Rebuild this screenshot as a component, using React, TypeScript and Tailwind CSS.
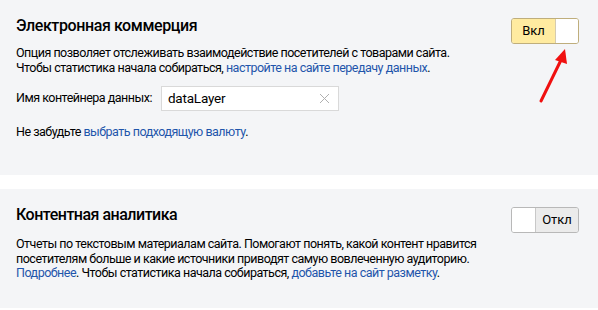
export default function App() {
  const font = { fontFamily: 'Roboto, "Liberation Sans", Arial, sans-serif' };
  return (
    <div className="w-[598px] h-[310px] bg-white relative text-[#000]" style={font}>
      <div className="h-[175px] bg-[#f4f5f7] px-4 pt-[15px] flex justify-between">
        <div>
          <div className="text-[16px] font-medium leading-[22px] tracking-[-0.4px]">Электронная коммерция</div>
          <div className="text-[12.5px] leading-[15px] mt-[8px] tracking-[-0.5px]">
            Опция позволяет отслеживать взаимодействие посетителей с товарами сайта.
            <br />
            Чтобы статистика начала собираться, <a className="text-[#1f55ab]">настройте на сайте передачу данных</a>.
          </div>
          <div className="flex items-center mt-[11px] text-[12.5px] tracking-[-0.5px]">
            <span>Имя контейнера данных:</span>
            <div className="ml-[9px] w-[178px] h-[25px] bg-white border border-[#d9d9d9] flex items-center pl-[6px] pr-[8px] justify-between">
              <span className="text-[13.5px] tracking-[-0.2px]">dataLayer</span>
              <svg width="11" height="11" viewBox="0 0 11 11"><path d="M1 1L10 10M10 1L1 10" stroke="#b0b0b0" strokeWidth="1" /></svg>
            </div>
          </div>
          <div className="text-[12.5px] mt-[12px] tracking-[-0.5px]">
            Не забудьте <a className="text-[#1f55ab]">выбрать подходящую валюту</a>.
          </div>
        </div>
        <div className="pt-[3px] pr-[3px]">
          <div className="w-[68px] h-[26px] rounded-[3px] border border-[#bfae7c] flex overflow-hidden">
            <div className="flex-1 bg-[#ffeba0] flex items-center justify-center text-[13px]">Вкл</div>
            <div className="w-[23px] bg-white border-l border-[#d5cbb0]"></div>
          </div>
        </div>
      </div>
      <div className="h-[14px]" />
      <div className="h-[119px] bg-[#f4f5f7] px-4 pt-[15px] flex justify-between">
        <div>
          <div className="text-[16px] font-medium leading-[22px] tracking-[-0.5px]">Контентная аналитика</div>
          <div className="text-[12.5px] leading-[14.5px] mt-[11px] tracking-[-0.5px]">
            Отчеты по текстовым материалам сайта. Помогают понять, какой контент нравится
            <br />
            посетителям больше и какие источники приводят самую вовлеченную аудиторию.
            <br />
            <a className="text-[#1f55ab]">Подробнее</a>. Чтобы статистика начала собираться, <a className="text-[#1f55ab]">добавьте на сайт разметку</a>.
          </div>
        </div>
        <div className="pt-[3px] pr-[3px]">
          <div className="w-[68px] h-[26px] rounded-[3px] border border-[#b8b8b8] flex overflow-hidden">
            <div className="w-[24px] bg-white border-r border-[#c8c8c8]"></div>
            <div className="flex-1 bg-[#ebebeb] flex items-center justify-center text-[13px]">Откл</div>
          </div>
        </div>
      </div>
      <svg className="absolute left-[536px] top-[46px]" width="36" height="60" viewBox="0 0 36 60">
        <path d="M5 55L26 12" stroke="#f01010" strokeWidth="3" strokeLinecap="round" />
        <path d="M29 3L19 14L31 18Z" fill="#f01010" />
      </svg>
    </div>
  );
}
